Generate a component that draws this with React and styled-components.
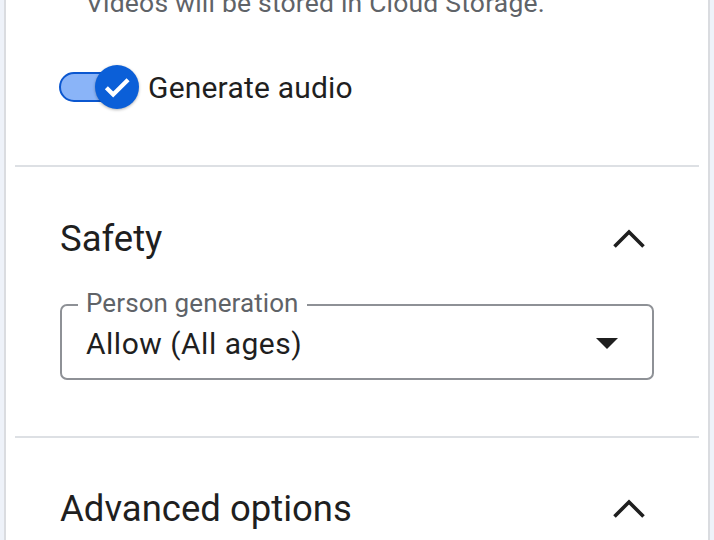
import React from 'react'
import styled, { createGlobalStyle } from 'styled-components'

const Global = createGlobalStyle`
  html, body { margin: 0; padding: 0; }
  body {
    background: #eef2f9;
    font-family: Roboto, "Liberation Sans", sans-serif;
    color: #1f1f1f;
    overflow: hidden;
  }
`

const Panel = styled.div`
  margin: 0 4px;
  height: 540px;
  overflow: hidden;
  background: #fff;
  border-left: 2px solid #dadce0;
  border-right: 2px solid #dadce0;
`

const Section = styled.div`
  padding: 0 54px 0 53px;
`

const Note = styled.div`
  margin-top: -15px;
  padding-left: 27px;
  font-size: 26.5px;
  line-height: 36px;
  color: #5f6368;
  letter-spacing: 0.2px;
`

const ToggleRow = styled.label`
  display: flex;
  align-items: center;
  height: 44px;
  margin-top: 44px;
  gap: 10px;
  font-size: 30px;
  letter-spacing: 0.2px;
  color: #1f1f1f;
`

const Track = styled.span`
  position: relative;
  display: block;
  width: 79px;
  height: 44px;
  flex: none;
  &::before {
    content: '';
    position: absolute;
    left: 0;
    top: 7px;
    width: 74px;
    height: 30px;
    box-sizing: border-box;
    border-radius: 15px;
    border: 2px solid #0b57d0;
    background: #8ab4f8;
  }
`

const Thumb = styled.span`
  position: absolute;
  left: 36px;
  top: 0;
  width: 44px;
  height: 44px;
  border-radius: 50%;
  background: #0b5fd8;
  box-shadow: 0 1px 3px rgba(0, 0, 0, 0.3);
  display: flex;
  align-items: center;
  justify-content: center;
`

const Divider = styled.hr`
  margin: ${p => p.$top}px 9px 0;
  border: 0;
  height: 2px;
  background: #dde0e4;
`

const Header = styled.div`
  display: flex;
  align-items: center;
  justify-content: space-between;
  height: 48px;
  margin-top: ${p => p.$top}px;
`

const Title = styled.h2`
  margin: 0 0 0 1px;
  font-size: 36.5px;
  font-weight: 400;
  letter-spacing: 0;
  color: #1f1f1f;
`

const IconButton = styled.button`
  width: 48px;
  height: 48px;
  margin-right: 1px;
  padding: 0;
  border: 0;
  background: none;
  display: flex;
  align-items: center;
  justify-content: center;
`

const Field = styled.div`
  position: relative;
  margin: 42px 0 0 1px;
  height: 76px;
  box-sizing: border-box;
  border: 2px solid #8e9196;
  border-radius: 7px;
  display: flex;
  align-items: center;
  justify-content: space-between;
  padding: 0 34px 0 24px;
`

const Legend = styled.span`
  position: absolute;
  left: 16px;
  top: -18px;
  padding: 0 8px;
  background: #fff;
  font-size: 26px;
  line-height: 30px;
  letter-spacing: 0.1px;
  color: #5f6368;
`

const Value = styled.span`
  font-size: 30px;
  letter-spacing: 0.5px;
  color: #1f1f1f;
  margin-top: 2px;
`

const Caret = styled.span`
  width: 0;
  height: 0;
  margin-top: 2px;
  border-left: 11px solid transparent;
  border-right: 11px solid transparent;
  border-top: 11px solid #1f1f1f;
`

const ChevronUp = () => (
  <svg width="36" height="24" viewBox="0 0 36 24">
    <polyline points="3.5,20.5 18,6 32.5,20.5" fill="none" stroke="#1f1f1f" strokeWidth="3.6" />
  </svg>
)

const Check = () => (
  <svg width="34" height="34" viewBox="0 0 24 24">
    <path d="M4.5 12.5l4.8 4.8L19.8 6.8" fill="none" stroke="#fff" strokeWidth="3" />
  </svg>
)

export default function App() {
  return (
    <>
      <Global />
      <Panel>
        <Section>
          <Note>Videos will be stored in Cloud Storage.</Note>
          <ToggleRow>
            <Track>
              <Thumb><Check /></Thumb>
            </Track>
            Generate audio
          </ToggleRow>
        </Section>
        <Divider $top={56} />
        <Section>
          <Header $top={47}>
            <Title>Safety</Title>
            <IconButton aria-label="Collapse"><ChevronUp /></IconButton>
          </Header>
          <Field>
            <Legend>Person generation</Legend>
            <Value>Allow (All ages)</Value>
            <Caret />
          </Field>
        </Section>
        <Divider $top={56} />
        <Section>
          <Header $top={46}>
            <Title>Advanced options</Title>
            <IconButton aria-label="Collapse"><ChevronUp /></IconButton>
          </Header>
        </Section>
      </Panel>
    </>
  )
}
